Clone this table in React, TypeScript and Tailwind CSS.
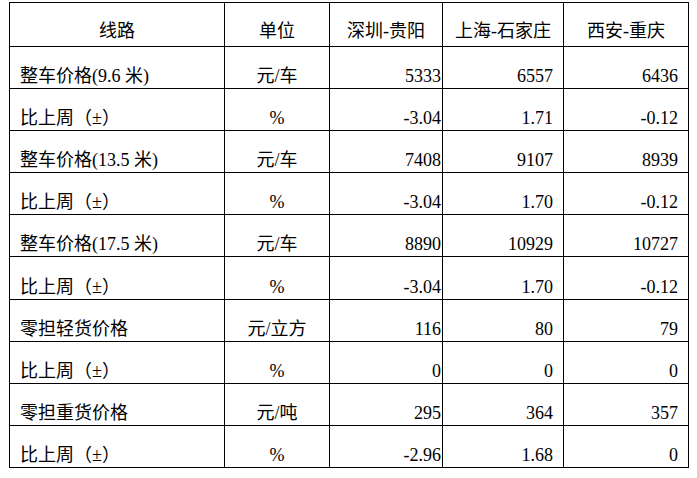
const header = ['线路', '单位', '深圳-贵阳', '上海-石家庄', '西安-重庆']

type Row = { label: string; unit: string; values: string[]; tall?: boolean }

const rows: Row[] = [
  { label: '整车价格(9.6 米)', unit: '元/车', values: ['5333', '6557', '6436'] },
  { label: '比上周（±）', unit: '%', values: ['-3.04', '1.71', '-0.12'] },
  { label: '整车价格(13.5 米)', unit: '元/车', values: ['7408', '9107', '8939'] },
  { label: '比上周（±）', unit: '%', values: ['-3.04', '1.70', '-0.12'] },
  { label: '整车价格(17.5 米)', unit: '元/车', values: ['8890', '10929', '10727'] },
  { label: '比上周（±）', unit: '%', values: ['-3.04', '1.70', '-0.12'], tall: true },
  { label: '零担轻货价格', unit: '元/立方', values: ['116', '80', '79'] },
  { label: '比上周（±）', unit: '%', values: ['0', '0', '0'] },
  { label: '零担重货价格', unit: '元/吨', values: ['295', '364', '357'] },
  { label: '比上周（±）', unit: '%', values: ['-2.96', '1.68', '0'] },
]

const valuePad = ['pr-[1px]', 'pr-[10px]', 'pr-[10px]']

export default function App(): React.JSX.Element {
  return (
    <div className="min-h-screen bg-white pt-[2px] pl-[9px] text-black [font-family:'Liberation_Serif','Noto_Sans_CJK_SC',serif]">
      <table className="table-fixed border-collapse text-[18px] leading-[22px]">
        <colgroup>
          <col className="w-[215px]" />
          <col className="w-[105px]" />
          <col className="w-[113px]" />
          <col className="w-[121px]" />
          <col className="w-[125px]" />
        </colgroup>
        <thead>
          <tr className="h-[44px]">
            {header.map((h) => (
              <th key={h} className="border border-black px-0 pb-[4px] text-center align-bottom font-normal">
                {h}
              </th>
            ))}
          </tr>
        </thead>
        <tbody>
          {rows.map((row, i) => (
            <tr key={i} className={row.tall ? 'h-[43px]' : 'h-[42px]'}>
              <td className="border border-black pl-[10px] pb-[1px] align-bottom">{row.label}</td>
              <td className="border border-black pb-[1px] text-center align-bottom">{row.unit}</td>
              {row.values.map((v, j) => (
                <td key={j} className={`border border-black pb-[1px] text-right align-bottom ${valuePad[j]}`}>
                  {v}
                </td>
              ))}
            </tr>
          ))}
        </tbody>
      </table>
    </div>
  )
}
